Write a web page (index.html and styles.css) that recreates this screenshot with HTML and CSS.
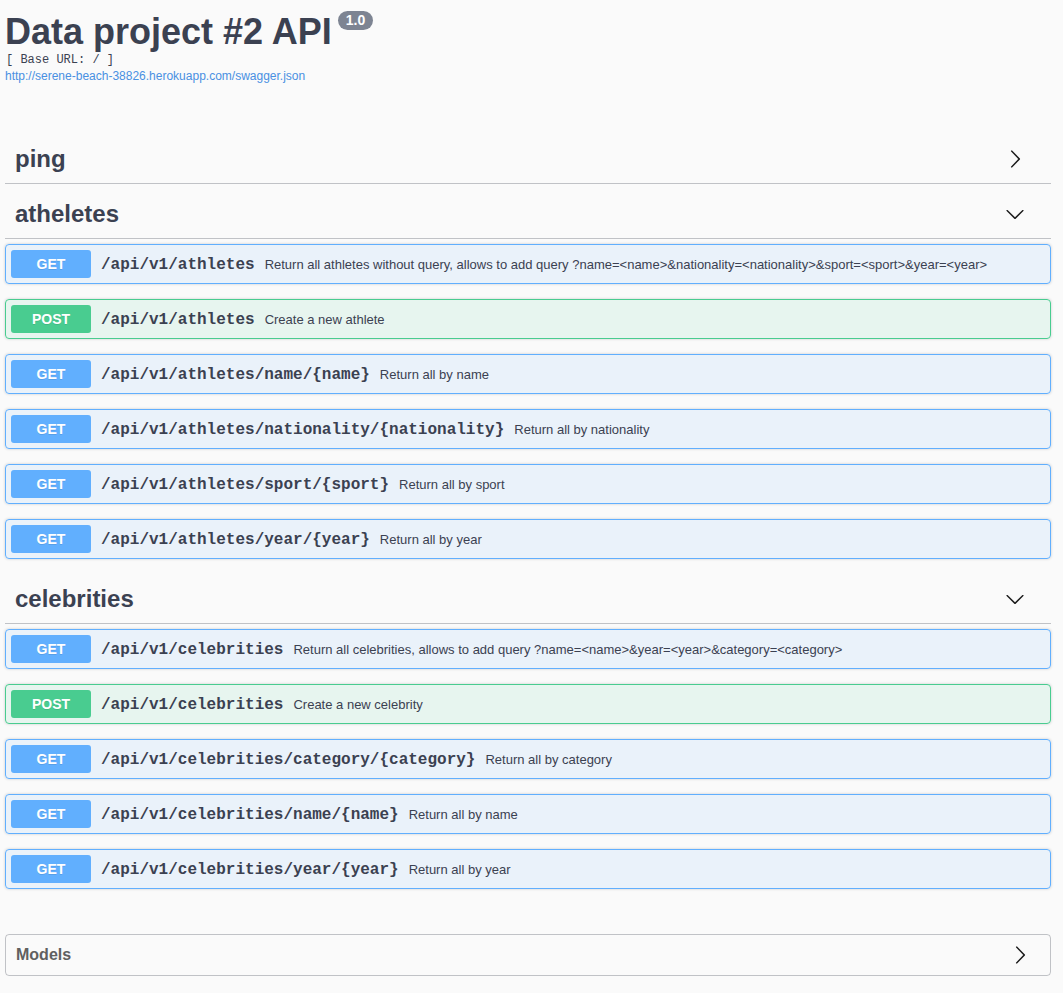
FILE: index.html
```html
<!DOCTYPE html>
<html lang="en">
<head>
<meta charset="utf-8">
<title>Data project #2 API</title>
<link rel="stylesheet" href="styles.css">
</head>
<body>
<div class="wrapper">
  <div class="info">
    <h2 class="title">Data project #2 API<span class="version">1.0</span></h2>
    <pre class="base-url">[ Base URL: / ]</pre>
    <a class="spec-link" href="#">http://serene-beach-38826.herokuapp.com/swagger.json</a>
  </div>

  <section class="tag-section">
    <h3 class="tag">
      <span class="tag-name">ping</span>
      <svg class="arrow" width="20" height="20" viewBox="0 0 20 20"><path d="M13.25 10L6.109 2.58c-.268-.27-.268-.707 0-.979.268-.27.701-.27.969 0l7.83 7.908c.268.271.268.709 0 .979l-7.830 7.908c-.268.271-.701.27-.969 0-.268-.269-.268-.707 0-.979L13.25 10z"/></svg>
    </h3>
  </section>

  <section class="tag-section">
    <h3 class="tag">
      <span class="tag-name">atheletes</span>
      <svg class="arrow" width="20" height="20" viewBox="0 0 20 20"><path d="M17.418 6.109c.272-.268.709-.268.979 0s.271.701 0 .969l-7.908 7.83c-.268.268-.707.268-.979 0l-7.908-7.83c-.27-.268-.27-.701 0-.969.271-.268.709-.268.979 0L10 13.25l7.418-7.141z"/></svg>
    </h3>
    <div class="opblock get"><span class="method">GET</span><span class="summary"><span class="path">/api/v1/athletes</span><span class="desc">Return all athletes without query, allows to add query ?name=&lt;name&gt;&amp;nationality=&lt;nationality&gt;&amp;sport=&lt;sport&gt;&amp;year=&lt;year&gt;</span></span></div>
    <div class="opblock post"><span class="method">POST</span><span class="summary"><span class="path">/api/v1/athletes</span><span class="desc">Create a new athlete</span></span></div>
    <div class="opblock get"><span class="method">GET</span><span class="summary"><span class="path">/api/v1/athletes/name/{name}</span><span class="desc">Return all by name</span></span></div>
    <div class="opblock get"><span class="method">GET</span><span class="summary"><span class="path">/api/v1/athletes/nationality/{nationality}</span><span class="desc">Return all by nationality</span></span></div>
    <div class="opblock get"><span class="method">GET</span><span class="summary"><span class="path">/api/v1/athletes/sport/{sport}</span><span class="desc">Return all by sport</span></span></div>
    <div class="opblock get"><span class="method">GET</span><span class="summary"><span class="path">/api/v1/athletes/year/{year}</span><span class="desc">Return all by year</span></span></div>
  </section>

  <section class="tag-section">
    <h3 class="tag">
      <span class="tag-name">celebrities</span>
      <svg class="arrow" width="20" height="20" viewBox="0 0 20 20"><path d="M17.418 6.109c.272-.268.709-.268.979 0s.271.701 0 .969l-7.908 7.83c-.268.268-.707.268-.979 0l-7.908-7.83c-.27-.268-.27-.701 0-.969.271-.268.709-.268.979 0L10 13.25l7.418-7.141z"/></svg>
    </h3>
    <div class="opblock get"><span class="method">GET</span><span class="summary"><span class="path">/api/v1/celebrities</span><span class="desc">Return all celebrities, allows to add query ?name=&lt;name&gt;&amp;year=&lt;year&gt;&amp;category=&lt;category&gt;</span></span></div>
    <div class="opblock post"><span class="method">POST</span><span class="summary"><span class="path">/api/v1/celebrities</span><span class="desc">Create a new celebrity</span></span></div>
    <div class="opblock get"><span class="method">GET</span><span class="summary"><span class="path">/api/v1/celebrities/category/{category}</span><span class="desc">Return all by category</span></span></div>
    <div class="opblock get"><span class="method">GET</span><span class="summary"><span class="path">/api/v1/celebrities/name/{name}</span><span class="desc">Return all by name</span></span></div>
    <div class="opblock get"><span class="method">GET</span><span class="summary"><span class="path">/api/v1/celebrities/year/{year}</span><span class="desc">Return all by year</span></span></div>
  </section>

  <section class="models">
    <h4 class="models-head">
      <span>Models</span>
      <svg class="arrow" width="20" height="20" viewBox="0 0 20 20"><path d="M13.25 10L6.109 2.58c-.268-.27-.268-.707 0-.979.268-.27.701-.27.969 0l7.83 7.908c.268.271.268.709 0 .979l-7.83 7.908c-.268.271-.701.27-.969 0-.268-.269-.268-.707 0-.979L13.25 10z"/></svg>
    </h4>
  </section>
</div>
</body>
</html>
```
FILE: styles.css
```css
html, body {
  margin: 0;
  padding: 0;
  background: #fafafa;
}
body {
  font-family: "Liberation Sans", Arial, sans-serif;
  color: #3b4151;
}
.wrapper {
  padding: 11px 12px 6px 5px;
}
.info {
  margin: 0 0 50px 0;
}
.title {
  margin: 0;
  font-size: 36px;
  line-height: 42px;
  font-weight: 700;
  color: #3b4151;
}
.version {
  display: inline-block;
  vertical-align: top;
  position: relative;
  top: 0;
  margin-left: 6px;
  padding: 2px 8px;
  font-size: 14px;
  line-height: 15px;
  font-weight: 700;
  color: #fff;
  background: #7d8492;
  border-radius: 57px;
}
.base-url {
  margin: 0;
  padding-left: 1px;
  font-family: "Liberation Mono", "Courier New", monospace;
  font-size: 12px;
  line-height: 15px;
  color: #3b4151;
}
.spec-link {
  display: block;
  font-size: 12px;
  line-height: 16px;
  color: #4990e2;
  text-decoration: none;
}
.tag-section {
  display: flex;
  flex-direction: column;
}
.tag {
  display: flex;
  align-items: center;
  justify-content: space-between;
  margin: 0 0 5px 0;
  padding: 10px 26px 10px 10px;
  font-size: 24px;
  line-height: 29px;
  font-weight: 700;
  color: #3b4151;
  border-bottom: 1px solid rgba(59, 65, 81, 0.3);
}
.arrow {
  display: block;
  fill: #1b1b1b;
  flex: none;
}
.opblock {
  display: flex;
  align-items: center;
  margin: 0 0 15px 0;
  padding: 5px;
  border: 1px solid;
  border-radius: 4px;
  box-shadow: 0 0 3px rgba(0, 0, 0, 0.19);
}
.opblock.get {
  background: rgba(97, 175, 254, 0.1);
  border-color: #61affe;
}
.opblock.post {
  background: rgba(73, 204, 144, 0.1);
  border-color: #49cc90;
}
.method {
  min-width: 80px;
  padding: 6px 0;
  font-size: 14px;
  line-height: 16px;
  font-weight: 700;
  text-align: center;
  color: #fff;
  border-radius: 3px;
  text-shadow: 0 1px 0 rgba(0, 0, 0, 0.1);
}
.get .method {
  background: #61affe;
}
.post .method {
  background: #49cc90;
}
.summary {
  display: flex;
  align-items: baseline;
  flex: 1;
  padding-top: 1px;
}
.path {
  padding: 0 10px;
  font-family: "Liberation Mono", "Courier New", monospace;
  font-size: 16px;
  font-weight: 700;
  color: #3b4151;
}
.desc {
  flex: 1;
  font-size: 13px;
  color: #3b4151;
}
.models {
  margin: 30px 0 0 0;
  border: 1px solid rgba(59, 65, 81, 0.3);
  border-radius: 4px;
}
.models-head {
  display: flex;
  align-items: center;
  justify-content: space-between;
  margin: 0;
  padding: 10px 20px 10px 10px;
  font-size: 16px;
  line-height: 20px;
  font-weight: 700;
  color: #606060;
}
```
